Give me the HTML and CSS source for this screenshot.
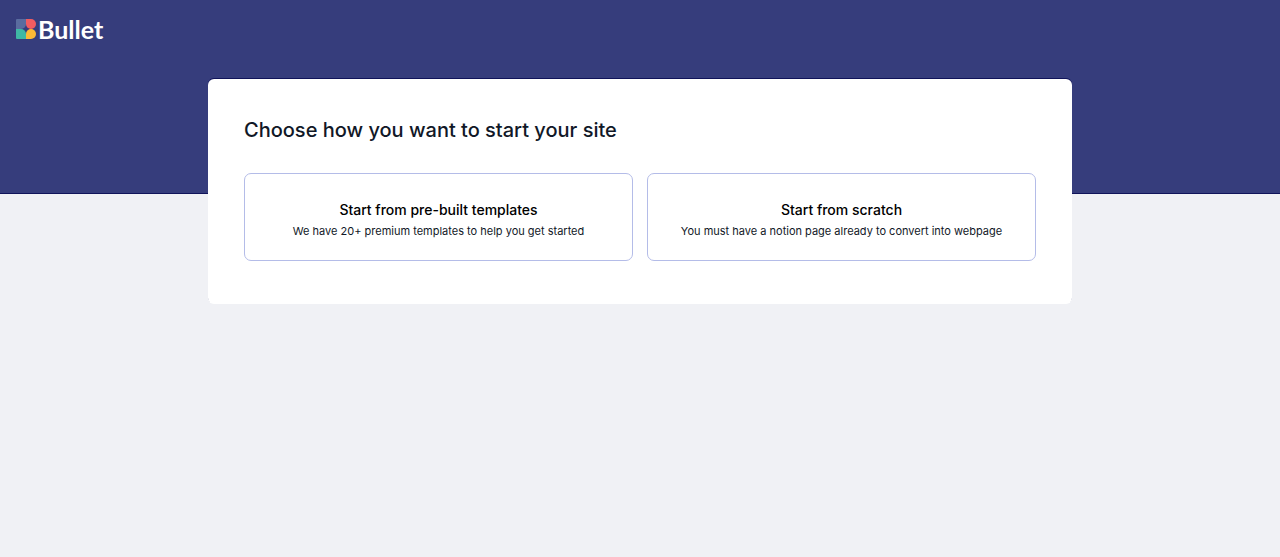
FILE: index.html
```html
<!DOCTYPE html>
<html lang="en">

<head>
    <meta charset="UTF-8">
    <meta name="viewport" content="width=device-width, initial-scale=1.0">
    <title>Bullet</title>
    <link rel="stylesheet" href="styles.css">
</head>

<body>
    <header class="header">
        <a href="#" class="logo">
            <svg class="logo-mark" viewBox="0 0 20 20" aria-hidden="true">
                <path fill="#5a6c9f" d="M0 1a1 1 0 0 1 1-1h9v5a5 5 0 0 1-5 5H0z" />
                <path fill="#f25c61" d="M10 0h5a5 5 0 0 1 0 10 5 5 0 0 1-5-5z" />
                <path fill="#3fb8a4" d="M0 10h5a5 5 0 0 1 5 5v5H1a1 1 0 0 1-1-1z" />
                <path fill="#fdb935" d="M15 10a5 5 0 0 1 0 10h-5v-5a5 5 0 0 1 5-5z" />
            </svg>
            <span class="logo-text">Bullet</span>
        </a>
    </header>

    <main class="card">
        <h1 class="title">Choose how you want to start your site</h1>

        <!--start options-->
        <div class="options">
            <button type="button" class="option">
                <span class="option-name">Start from pre-built templates</span>
                <span class="option-info">We have 20+ premium templates to help you get started</span>
            </button>
            <button type="button" class="option">
                <span class="option-name">Start from scratch</span>
                <span class="option-info">You must have a notion page already to convert into webpage</span>
            </button>
        </div>
    </main>
</body>

</html>
```
FILE: styles.css
```css
* {
    margin: 0;
    padding: 0;
    box-sizing: border-box;
}

body {
    background-color: #f0f1f5;
    font-family: Inter, "Liberation Sans", sans-serif;
    color: #111827;
}

.header {
    height: 194px;
    padding: 16px;
    background-color: #363d7c;
    border-bottom: 1px solid #10145a;
}

.logo {
    display: inline-flex;
    align-items: center;
    gap: 2px;
    height: 26px;
    color: white;
    text-decoration: none;
}

.logo-mark {
    width: 20px;
    height: 20px;
}

.logo-text {
    font-family: Lato, sans-serif;
    font-size: 25px;
    font-weight: 700;
    line-height: 26px;
}

/*the card overlaps the bottom of the header*/
.card {
    position: relative;
    width: calc(100% - 32px);
    max-width: 864px;
    margin: -115px auto 32px;
    padding: 36px 36px 43px;
    background-color: white;
    border-radius: 6px;
    box-shadow: 0 -1px 0 #10145a;
}

.title {
    font-size: 20px;
    font-weight: 500;
    line-height: 30px;
}

.options {
    display: grid;
    grid-template-columns: repeat(auto-fit, minmax(280px, 1fr));
    gap: 14px;
    margin-top: 28px;
}

.option {
    display: flex;
    flex-direction: column;
    align-items: center;
    padding: 24px 16px 20px;
    background-color: white;
    border: 1px solid #b4bce8;
    border-radius: 7px;
    font-family: inherit;
    color: #111827;
    cursor: pointer;
}

.option:hover {
    border-color: #363d7c;
}

.option-name {
    font-size: 14px;
    font-weight: 500;
    line-height: 24px;
    color: black;
}

.option-info {
    font-size: 11px;
    line-height: 18px;
}
```
